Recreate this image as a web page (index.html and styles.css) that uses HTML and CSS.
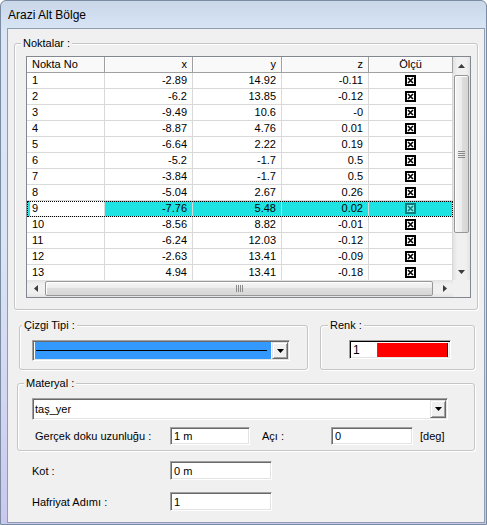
FILE: index.html
```html
<!DOCTYPE html>
<html lang="tr">
<head>
    <meta charset="UTF-8">
    <meta name="viewport" content="width=device-width, initial-scale=1.0">
    <title>Arazi Alt Bölge</title>
    <link rel="stylesheet" href="styles.css">
</head>
<body>
    <svg class="defs" width="0" height="0">
        <symbol id="chk" viewBox="0 0 11 11">
            <rect x="1" y="1" width="9" height="9" fill="#fff" stroke="#000" stroke-width="2"/>
            <path d="M3 3l5 5M8 3l-5 5" stroke="#000" stroke-width="1.6"/>
        </symbol>
        <symbol id="down" viewBox="0 0 7 4"><path d="M0 0h7L3.5 4z"/></symbol>
        <symbol id="up" viewBox="0 0 7 4"><path d="M0 4h7L3.5 0z"/></symbol>
        <symbol id="left" viewBox="0 0 4 7"><path d="M4 0v7L0 3.5z"/></symbol>
        <symbol id="right" viewBox="0 0 4 7"><path d="M0 0v7L4 3.5z"/></symbol>
    </svg>

    <div class="window">
        <div class="titlebar">Arazi Alt Bölge</div>
        <div class="client">

            <div class="group points">
                <span class="legend">Noktalar :</span>
                <div class="listview">
                    <div class="lv-main">
                        <div class="lv-header">
                            <div class="hcell left">Nokta No</div>
                            <div class="hcell">x</div>
                            <div class="hcell">y</div>
                            <div class="hcell">z</div>
                            <div class="hcell center">Ölçü</div>
                        </div>
                        <div class="lv-row"><div class="cell left">1</div><div class="cell">-2.89</div><div class="cell">14.92</div><div class="cell">-0.11</div><div class="cell center"><svg class="chk"><use href="#chk"/></svg></div></div>
                        <div class="lv-row"><div class="cell left">2</div><div class="cell">-6.2</div><div class="cell">13.85</div><div class="cell">-0.12</div><div class="cell center"><svg class="chk"><use href="#chk"/></svg></div></div>
                        <div class="lv-row"><div class="cell left">3</div><div class="cell">-9.49</div><div class="cell">10.6</div><div class="cell">-0</div><div class="cell center"><svg class="chk"><use href="#chk"/></svg></div></div>
                        <div class="lv-row"><div class="cell left">4</div><div class="cell">-8.87</div><div class="cell">4.76</div><div class="cell">0.01</div><div class="cell center"><svg class="chk"><use href="#chk"/></svg></div></div>
                        <div class="lv-row"><div class="cell left">5</div><div class="cell">-6.64</div><div class="cell">2.22</div><div class="cell">0.19</div><div class="cell center"><svg class="chk"><use href="#chk"/></svg></div></div>
                        <div class="lv-row"><div class="cell left">6</div><div class="cell">-5.2</div><div class="cell">-1.7</div><div class="cell">0.5</div><div class="cell center"><svg class="chk"><use href="#chk"/></svg></div></div>
                        <div class="lv-row"><div class="cell left">7</div><div class="cell">-3.84</div><div class="cell">-1.7</div><div class="cell">0.5</div><div class="cell center"><svg class="chk"><use href="#chk"/></svg></div></div>
                        <div class="lv-row"><div class="cell left">8</div><div class="cell">-5.04</div><div class="cell">2.67</div><div class="cell">0.26</div><div class="cell center"><svg class="chk"><use href="#chk"/></svg></div></div>
                        <div class="lv-row focus"><div class="cell left">9</div><div class="cell sel">-7.76</div><div class="cell sel">5.48</div><div class="cell sel">0.02</div><div class="cell sel center"><svg class="chk dim"><use href="#chk"/></svg></div></div>
                        <div class="lv-row"><div class="cell left">10</div><div class="cell">-8.56</div><div class="cell">8.82</div><div class="cell">-0.01</div><div class="cell center"><svg class="chk"><use href="#chk"/></svg></div></div>
                        <div class="lv-row"><div class="cell left">11</div><div class="cell">-6.24</div><div class="cell">12.03</div><div class="cell">-0.12</div><div class="cell center"><svg class="chk"><use href="#chk"/></svg></div></div>
                        <div class="lv-row"><div class="cell left">12</div><div class="cell">-2.63</div><div class="cell">13.41</div><div class="cell">-0.09</div><div class="cell center"><svg class="chk"><use href="#chk"/></svg></div></div>
                        <div class="lv-row"><div class="cell left">13</div><div class="cell">4.94</div><div class="cell">13.41</div><div class="cell">-0.18</div><div class="cell center"><svg class="chk"><use href="#chk"/></svg></div></div>
                    </div>

                    <div class="vscroll">
                        <div class="sb-btn"><svg class="arr-v"><use href="#up"/></svg></div>
                        <div class="sb-track-v">
                            <div class="thumb-v">
                                <svg class="grip-v" viewBox="0 0 7 7"><path d="M0 .5h7M0 2.5h7M0 4.5h7M0 6.5h7" stroke="#8a8a8a"/></svg>
                            </div>
                        </div>
                        <div class="sb-btn"><svg class="arr-v"><use href="#down"/></svg></div>
                    </div>

                    <div class="hscroll">
                        <div class="sb-btn"><svg class="arr-h"><use href="#left"/></svg></div>
                        <div class="sb-track-h">
                            <div class="thumb-h">
                                <svg class="grip-h" viewBox="0 0 7 7"><path d="M.5 0v7M2.5 0v7M4.5 0v7M6.5 0v7" stroke="#8a8a8a"/></svg>
                            </div>
                        </div>
                        <div class="sb-btn"><svg class="arr-h"><use href="#right"/></svg></div>
                    </div>
                    <div class="sb-corner"></div>
                </div>
            </div>

            <div class="style-row">
                <div class="group line-type">
                    <span class="legend">Çizgi Tipi :</span>
                    <div class="combo line-combo">
                        <div class="line-item"><span class="line-sample"></span></div>
                        <div class="drop-btn"><svg class="arr-drop"><use href="#down"/></svg></div>
                    </div>
                </div>
                <div class="group color">
                    <span class="legend">Renk :</span>
                    <div class="color-box">
                        <span class="color-num">1</span>
                        <span class="color-swatch"></span>
                    </div>
                </div>
            </div>

            <div class="group material">
                <span class="legend">Materyal :</span>
                <div class="combo mat-combo">
                    <div class="mat-text">taş_yer</div>
                    <div class="drop-btn"><svg class="arr-drop"><use href="#down"/></svg></div>
                </div>
                <div class="tex-row">
                    <span class="lbl lbl-tex">Gerçek doku uzunluğu :</span>
                    <div class="edit tex-len">1 m</div>
                    <span class="lbl lbl-angle">Açı :</span>
                    <div class="edit tex-angle">0</div>
                    <span class="unit">[deg]</span>
                </div>
            </div>

            <div class="field-row first">
                <span class="lbl lbl-field">Kot :</span>
                <div class="edit field-edit">0 m</div>
            </div>
            <div class="field-row">
                <span class="lbl lbl-field">Hafriyat Adımı :</span>
                <div class="edit field-edit">1</div>
            </div>

        </div>
    </div>
</body>
</html>
```

FILE: styles.css
```css
*{
    box-sizing: border-box;
}
body{
    margin: 0;
    font-family: "Liberation Sans", Arial, sans-serif;
    font-size: 11px;
    color: #000;
    background: #fff;
}
.defs{
    position: absolute;
    width: 0;
    height: 0;
}

/* window frame */
.window{
    width: 487px;
    height: 525px;
    display: flex;
    flex-direction: column;
    border: 1px solid #7b8ca2;
    border-radius: 6px 6px 0 0;
    padding: 0 1px 1px 6px;
    background: linear-gradient(180deg, #c9d7e9 0%, #dae6f6 6%, #d9e5f5 45%, #d2d7f2 75%, #c9c7ee 100%);
}
.titlebar{
    flex: none;
    height: 27px;
    line-height: 28px;
    padding-left: 1px;
    font-size: 12px;
    color: #000;
}
.client{
    flex: 1;
    background: #f0f0f0;
    border: 1px solid #8d9db2;
    padding-top: 14px;
}

/* group boxes */
.group{
    position: relative;
    border: 1px solid #c5c5c5;
    border-radius: 3px;
    box-shadow: inset 1px 1px 0 #fff, 1px 1px 0 #fff;
}
.legend{
    position: absolute;
    top: -7px;
    left: 6px;
    padding: 0 2px;
    line-height: 13px;
    background: #f0f0f0;
    white-space: nowrap;
}
.points{
    margin-left: 6px;
    width: 464px;
    height: 267px;
    padding: 12px 0 0 11px;
}

/* list view */
.listview{
    width: 445px;
    height: 242px;
    border: 1px solid #828790;
    background: #fff;
    display: grid;
    grid-template-columns: 426px 17px;
    grid-template-rows: 223px 17px;
}
.lv-main{
    overflow: hidden;
}
.lv-header,
.lv-row{
    display: grid;
    grid-template-columns: 78px 88px 89px 87px 84px;
    height: 16px;
}
.hcell{
    line-height: 15px;
    padding: 0 5px;
    text-align: right;
    background: #f9f9f9;
    border-right: 1px solid #a0a0a0;
    border-bottom: 1px solid #a0a0a0;
    box-shadow: inset 1px 1px 0 #fff;
    white-space: nowrap;
}
.cell{
    line-height: 15px;
    padding: 0 5px;
    text-align: right;
    border-right: 1px solid #d9d9d9;
    border-bottom: 1px solid #d9d9d9;
    white-space: nowrap;
}
.left{
    text-align: left;
}
.center{
    text-align: center;
}
.cell.center{
    display: flex;
    align-items: center;
    justify-content: center;
    padding: 0 0 1px;
}
.chk{
    width: 11px;
    height: 11px;
}
.chk.dim{
    opacity: 0.45;
}
.focus{
    outline: 1px dotted #000;
    outline-offset: -1px;
}
.focus .cell.left{
    box-shadow: inset 3px 0 0 #1de3e3;
}
.cell.sel{
    background: #1de3e3;
}

/* scroll bars */
.vscroll{
    display: flex;
    flex-direction: column;
    background: linear-gradient(90deg, #e2e2e2, #f0f0f0 25%, #f0f0f0 75%, #e4e4e4);
}
.hscroll{
    display: flex;
    background: linear-gradient(180deg, #e2e2e2, #f0f0f0 25%, #f0f0f0 75%, #e4e4e4);
}
.sb-btn{
    flex: none;
    width: 17px;
    height: 17px;
    display: flex;
    align-items: center;
    justify-content: center;
}
.arr-v{
    width: 7px;
    height: 4px;
    fill: #3c3c3c;
}
.arr-h{
    width: 4px;
    height: 7px;
    fill: #3c3c3c;
}
.sb-track-v{
    flex: 1;
    padding-top: 1px;
}
.sb-track-h{
    flex: 1;
    padding-left: 1px;
}
.thumb-v{
    height: 158px;
    margin: 0 1px;
    border: 1px solid #979797;
    border-radius: 2px;
    background: linear-gradient(90deg, #f5f5f5, #ececec 50%, #dedede 50%, #d6d6d6);
    box-shadow: inset 1px 1px 0 #fff;
    display: flex;
    align-items: center;
    justify-content: center;
}
.thumb-h{
    width: 388px;
    height: 15px;
    margin-top: 1px;
    border: 1px solid #979797;
    border-radius: 2px;
    background: linear-gradient(180deg, #f5f5f5, #ececec 50%, #dedede 50%, #d6d6d6);
    box-shadow: inset 1px 1px 0 #fff;
    display: flex;
    align-items: center;
    justify-content: center;
}
.grip-v,
.grip-h{
    width: 7px;
    height: 7px;
}
.sb-corner{
    background: #f0f0f0;
}

/* line type + colour */
.style-row{
    display: flex;
    gap: 12px;
    margin: 15px 0 0 11px;
}
.line-type{
    width: 289px;
    height: 45px;
    padding: 14px 0 0 12px;
}
.line-type .legend{
    left: 2px;
}
.color{
    width: 155px;
    height: 45px;
    padding: 14px 0 0 28px;
}
.color .legend{
    left: 7px;
}

.combo{
    display: flex;
    padding: 1px;
    background: #fff;
    border: 1px solid;
    border-color: #a0a0a0 #fff #fff #a0a0a0;
    box-shadow: inset 1px 1px 0 #696969, inset -1px -1px 0 #e3e3e3;
}
.line-combo{
    width: 258px;
    height: 21px;
}
.line-item{
    flex: 1;
    margin: 0 1px;
    background: #3399ff;
    display: flex;
    align-items: center;
    padding: 0 4px 0 1px;
}
.line-sample{
    flex: 1;
    height: 1px;
    background: #000;
}
.drop-btn{
    flex: none;
    width: 16px;
    background: #f0f0f0;
    border: 1px solid;
    border-color: #e3e3e3 #696969 #696969 #e3e3e3;
    box-shadow: inset 1px 1px 0 #fff, inset -1px -1px 0 #a0a0a0;
    display: flex;
    align-items: center;
    justify-content: center;
}
.arr-drop{
    width: 7px;
    height: 4px;
    fill: #000;
}

.color-box{
    display: flex;
    width: 102px;
    height: 19px;
    padding: 1px;
    border: 1px solid;
    border-color: #a0a0a0 #fff #fff #a0a0a0;
    box-shadow: inset 1px 1px 0 #000, inset -1px -1px 0 #e3e3e3;
    background: #fff;
}
.color-num{
    width: 26px;
    line-height: 16px;
    padding-left: 2px;
    font-size: 12px;
}
.color-swatch{
    flex: 1;
    margin: 1px 1px 0 0;
    background: #ff0000;
    border-left: 1px solid #5a5a5a;
    border-right: 1px solid #000;
}

/* material */
.material{
    margin: 13px 0 0 9px;
    width: 458px;
    height: 68px;
    padding: 14px 0 0 14px;
}
.mat-combo{
    width: 416px;
    height: 22px;
}
.mat-text{
    flex: 1;
    line-height: 18px;
    padding-left: 1px;
}
.tex-row{
    display: flex;
    align-items: center;
    margin-top: 7px;
}
.lbl{
    white-space: nowrap;
}
.lbl-tex{
    margin-left: 3px;
    width: 135px;
}
.lbl-angle{
    margin-left: 12px;
    width: 69px;
}
.unit{
    margin-left: 7px;
}
.edit{
    height: 18px;
    line-height: 15px;
    padding: 1px 3px;
    background: #fff;
    border: 1px solid;
    border-color: #a0a0a0 #fff #fff #a0a0a0;
    box-shadow: inset 1px 1px 0 #696969, inset -1px -1px 0 #e3e3e3;
    white-space: nowrap;
}
.tex-len{
    width: 80px;
}
.tex-angle{
    width: 82px;
}

/* bottom fields */
.field-row{
    display: flex;
    align-items: center;
    margin: 12px 0 0 24px;
}
.field-row.first{
    margin-top: 10px;
}
.lbl-field{
    width: 138px;
}
.field-edit{
    width: 102px;
    height: 19px;
    line-height: 16px;
}
```
